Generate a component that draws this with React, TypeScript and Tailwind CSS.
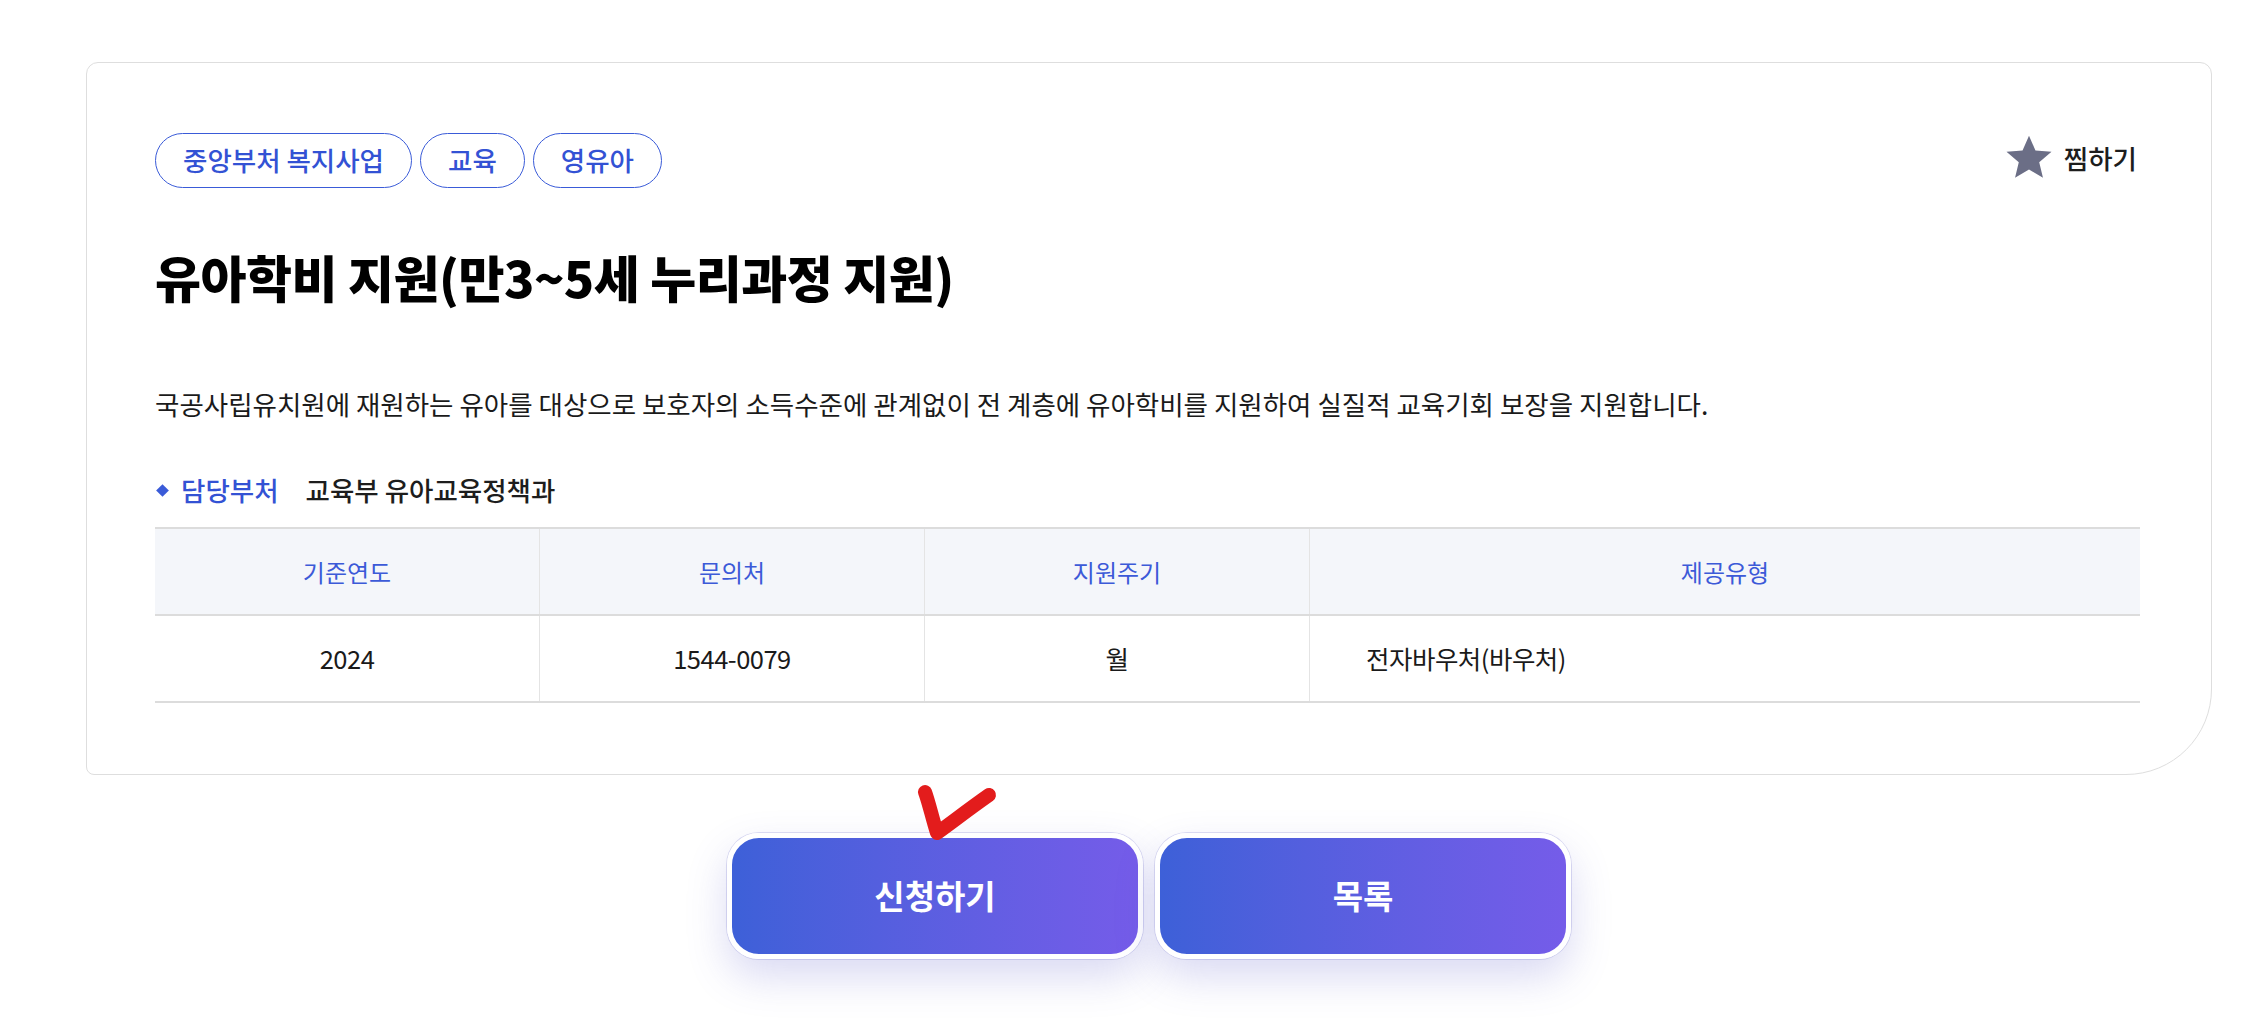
import React from "react";

const tags = ["중앙부처 복지사업", "교육", "영유아"];

const columns = [
  { head: "기준연도", value: "2024", width: "w-[385px]", center: true },
  { head: "문의처", value: "1544-0079", width: "w-[385px]", center: true },
  { head: "지원주기", value: "월", width: "w-[385px]", center: true },
  { head: "제공유형", value: "전자바우처(바우처)", width: "flex-1", center: false },
];

function Star() {
  return (
    <svg width="50" height="48" viewBox="0 0 24 23" fill="#6b6e86">
      <path d="M12 0.8l3.1 7.1 7.7.6-5.9 5 1.8 7.5L12 17l-6.7 4 1.8-7.5-5.9-5 7.7-.6z" />
    </svg>
  );
}

function CheckMark() {
  return (
    <svg
      className="absolute left-[186px] top-[-52px] pointer-events-none"
      width="100"
      height="72"
      viewBox="0 0 100 72"
    >
      <path
        d="M12 11 C16 22 19 36 24 52 C38 42 56 28 76 14"
        fill="none"
        stroke="#e31c1c"
        strokeWidth="14"
        strokeLinecap="round"
        strokeLinejoin="round"
      />
    </svg>
  );
}

export default function App() {
  return (
    <div className="min-h-screen bg-white pt-[62px] pl-[86px] pr-[40px] font-['Noto_Sans_CJK_KR',sans-serif] text-[#1d1d1d]">
      {/* 카드 */}
      <div className="w-[2126px] border border-[#dedede] rounded-tl-[12px] rounded-tr-[12px] rounded-bl-[8px] rounded-br-[86px] bg-white pt-[70px] pl-[68px] pr-[71px] pb-[71px]">
        <div className="flex items-center justify-between">
          <div className="flex gap-[8px]">
            {tags.map((t) => (
              <span
                key={t}
                className="h-[55px] px-[27px] flex items-center rounded-full border border-[#3a5bd8] text-[#3352d4] text-[26.5px] font-medium leading-none"
              >
                {t}
              </span>
            ))}
          </div>
          <button className="flex items-center gap-[10px] mr-[3px] mt-[-6px]">
            <Star />
            <span className="text-[26.5px] font-medium text-[#1d1d1d]">찜하기</span>
          </button>
        </div>

        <h1 className="mt-[56px] text-[50px] leading-[64px] font-black tracking-[-0.5px] text-black">
          유아학비 지원(만3~5세 누리과정 지원)
        </h1>

        <p className="mt-[78px] text-[26.5px] leading-[36px] text-[#1a1a1a]">
          국공사립유치원에 재원하는 유아를 대상으로 보호자의 소득수준에 관계없이 전 계층에 유아학비를 지원하여 실질적 교육기회 보장을 지원합니다.
        </p>

        <div className="mt-[50px] flex items-center text-[26.5px] leading-[36px] font-medium">
          <span className="w-[9px] h-[9px] rotate-45 bg-[#3a5bd8] ml-[3px]" />
          <span className="ml-[14px] text-[#3352d4]">담당부처</span>
          <span className="ml-[27px] text-[#1d1d1d]">교육부 유아교육정책과</span>
        </div>

        {/* 표 */}
        <div className="mt-[19px] border-t-2 border-[#dcdcdc]">
          <div className="flex bg-[#f4f6fa] border-b-2 border-[#dcdcdc]">
            {columns.map((c, i) => (
              <div
                key={c.head}
                className={`${c.width} h-[85px] flex items-center justify-center text-[24px] text-[#3c5ad8] ${
                  i < columns.length - 1 ? "border-r border-[#e4e4e4]" : ""
                }`}
              >
                {c.head}
              </div>
            ))}
          </div>
          <div className="flex border-b-2 border-[#dcdcdc]">
            {columns.map((c, i) => (
              <div
                key={c.head}
                className={`${c.width} h-[85px] flex items-center ${
                  c.center ? "justify-center" : "justify-start pl-[56px]"
                } text-[25.5px] tracking-[-0.5px] text-[#1a1a1a] ${
                  i < columns.length - 1 ? "border-r border-[#e4e4e4]" : ""
                }`}
              >
                {c.value}
              </div>
            ))}
          </div>
        </div>
      </div>

      {/* 버튼 */}
      <div className="w-[2126px] flex justify-center mt-[58px]">
        <div className="relative flex gap-[12px]">
          <button className="w-[416px] h-[126px] rounded-[32px] border-[5px] border-white bg-linear-to-r from-[#3d60d8] to-[#755ce9] text-white text-[33px] font-bold shadow-[0_18px_40px_rgba(88,88,200,0.22),0_0_0_1px_rgba(200,200,235,0.6)]">
            신청하기
          </button>
          <button className="w-[416px] h-[126px] rounded-[32px] border-[5px] border-white bg-linear-to-r from-[#3d60d8] to-[#755ce9] text-white text-[33px] font-bold shadow-[0_18px_40px_rgba(88,88,200,0.22),0_0_0_1px_rgba(200,200,235,0.6)]">
            목록
          </button>
          <CheckMark />
        </div>
      </div>
    </div>
  );
}
